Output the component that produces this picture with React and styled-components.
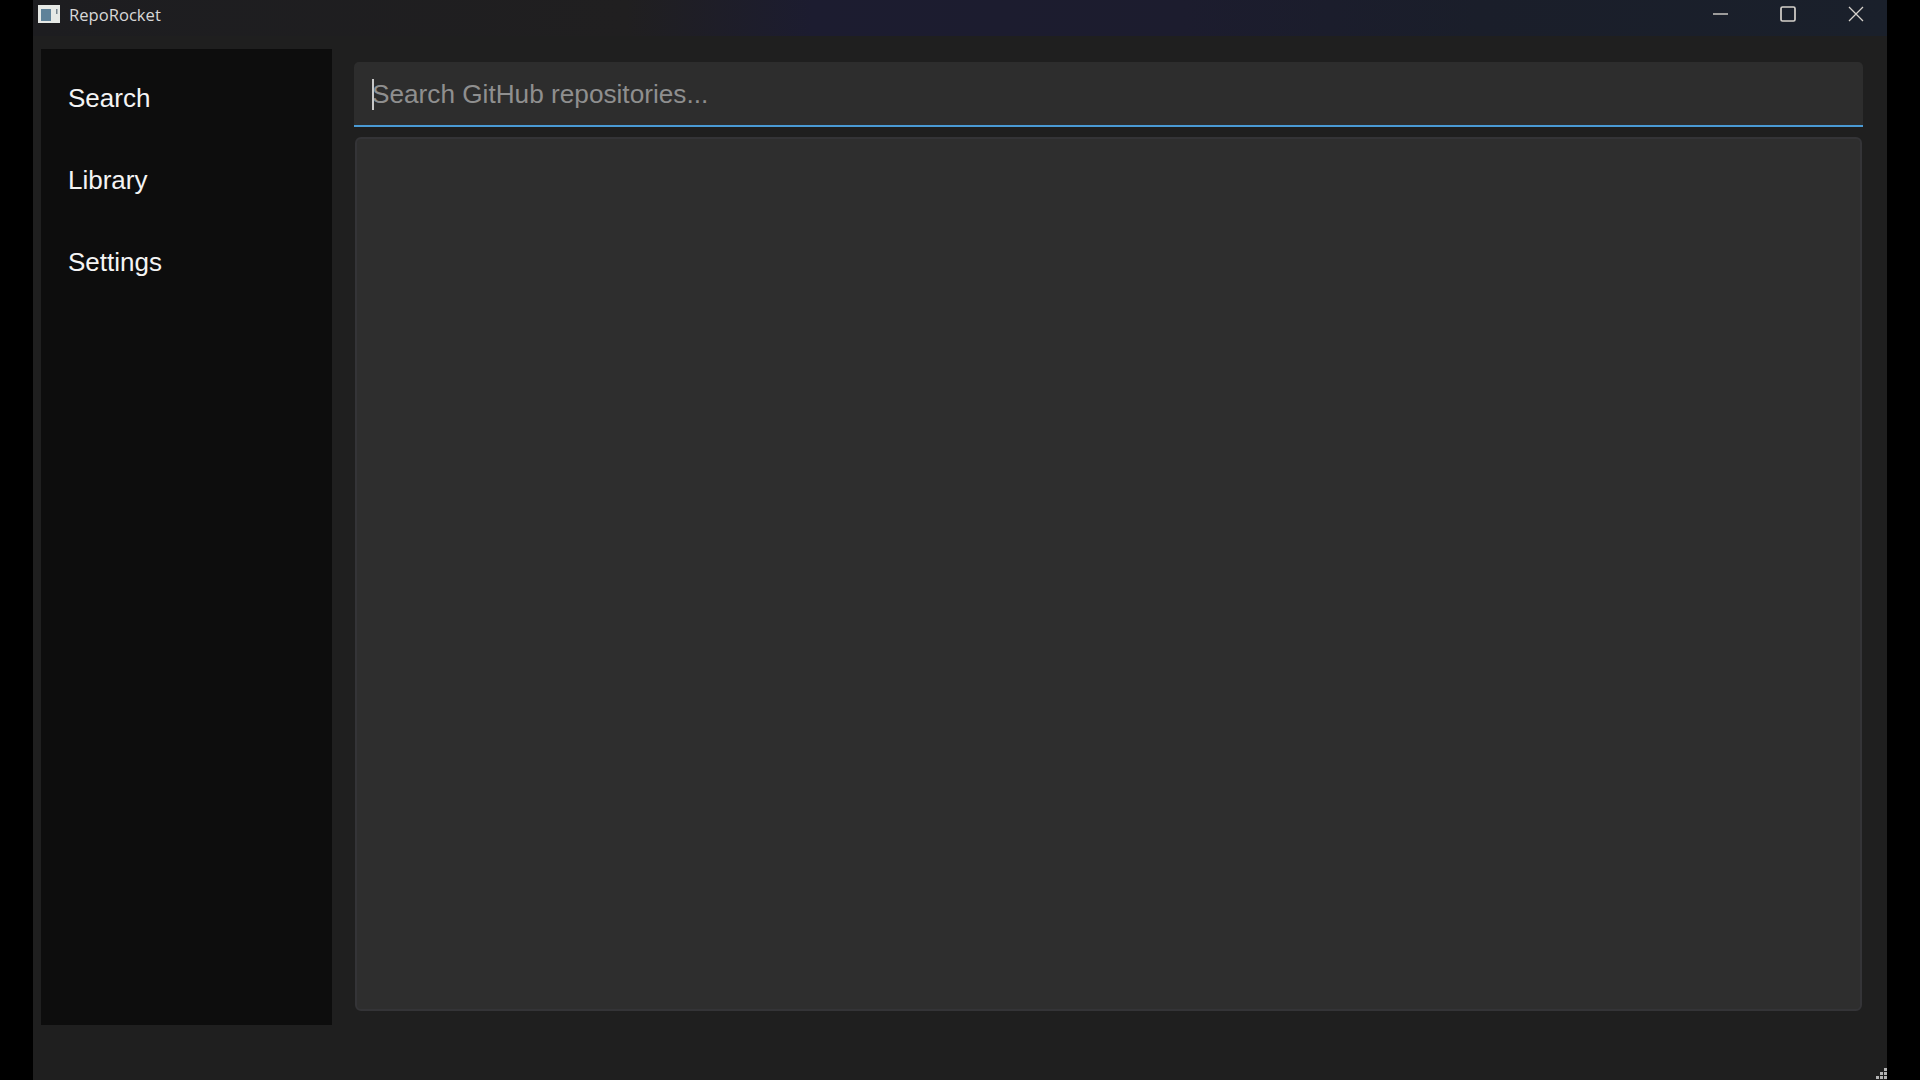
import React from "react";
import styled, { createGlobalStyle } from "styled-components";

const Global = createGlobalStyle`
  html, body { margin: 0; padding: 0; background: #000; height: 100%; overflow: hidden; }
  #root { height: 100%; }
  * { box-sizing: border-box; }
`;

const Screen = styled.div`
  width: 1920px;
  height: 1080px;
  padding: 0 33px;
  background: #000;
`;

const Win = styled.div`
  position: relative;
  height: 100%;
  display: flex;
  flex-direction: column;
  background: #1f1f1f;
`;

const TitleBar = styled.header`
  height: 36px;
  flex: none;
  display: flex;
  align-items: center;
  padding: 0 23px 0 5px;
  background: linear-gradient(90deg, #1d1d20 0%, #201f20 32%, #1c1c30 42%, #1c1c2e 62%, #1a1e2a 78%, #1a202b 100%);
`;

const AppIcon = styled.svg`
  width: 22px;
  height: 18px;
  flex: none;
  margin-top: -9px;
`;

const AppName = styled.span`
  margin-left: 9px;
  margin-top: -8px;
  font: 16.6px "Open Sans", "Noto Sans", sans-serif;
  color: #d8d8d8;
`;

const Controls = styled.div`
  margin-left: auto;
  margin-top: -8px;
  display: flex;
  align-items: center;
  gap: 52px;
`;

const Ctl = styled.svg`
  width: 16px;
  height: 16px;
  display: block;
  stroke: #d6d2cc;
  fill: none;
`;

const Body = styled.div`
  flex: 1;
  display: flex;
  padding: 13px 24px 55px 8px;
  gap: 22px;
`;

const Sidebar = styled.nav`
  width: 291px;
  flex: none;
  padding-top: 8px;
  background: #0d0d0d;
`;

const NavItem = styled.div`
  height: 82px;
  display: flex;
  align-items: center;
  padding-left: 27px;
  font: 26px "Liberation Sans", Arial, sans-serif;
  color: #f4f4f4;
`;

const Main = styled.main`
  flex: 1;
  display: flex;
  flex-direction: column;
  gap: 10px;
  padding-bottom: 14px;
`;

const SearchWrap = styled.div`
  position: relative;
  margin-top: 13px;
  height: 65px;
  flex: none;
`;

const SearchInput = styled.input`
  width: 100%;
  height: 100%;
  display: block;
  border: 0;
  outline: 0;
  border-radius: 5px 5px 0 0;
  border-bottom: 2px solid #4a9ad4;
  background: #2d2d2d;
  padding: 1px 0 0 18px;
  font: 26.2px "Liberation Sans", Arial, sans-serif;
  color: #eee;
  &::placeholder { color: #8f8f8f; opacity: 1; }
`;

const Caret = styled.span`
  position: absolute;
  left: 18px;
  top: 17px;
  width: 2px;
  height: 31px;
  background: #c8c8c8;
`;

const Results = styled.section`
  flex: 1;
  margin: 0 1px;
  border-radius: 6px;
  border: 2px solid #343437;
  background: #2e2e2e;
`;

const Grip = styled.svg`
  position: absolute;
  right: 0;
  bottom: 0;
  width: 11px;
  height: 12px;
  fill: #b4b4b4;
`;

export default function App() {
  return (
    <Screen>
      <Global />
      <Win>
        <TitleBar>
          <AppIcon viewBox="0 0 22 18">
            <rect width="22" height="18" fill="#e6e9e6" />
            <rect x="3" y="4" width="10" height="12" fill="#5f8299" />
            <rect x="18" y="4" width="1.5" height="5" fill="#77858f" />
          </AppIcon>
          <AppName>RepoRocket</AppName>
          <Controls>
            <Ctl viewBox="0 0 16 16"><path d="M1 8H16" strokeWidth="1.4" /></Ctl>
            <Ctl viewBox="0 0 16 16"><rect x="1" y="1" width="14" height="14" rx="1.5" strokeWidth="1.7" /></Ctl>
            <Ctl viewBox="0 0 16 16"><path d="M1 1L15 15M15 1L1 15" strokeWidth="1.3" /></Ctl>
          </Controls>
        </TitleBar>
        <Body>
          <Sidebar>
            <NavItem>Search</NavItem>
            <NavItem>Library</NavItem>
            <NavItem>Settings</NavItem>
          </Sidebar>
          <Main>
            <SearchWrap>
              <SearchInput placeholder="Search GitHub repositories..." />
              <Caret />
            </SearchWrap>
            <Results />
          </Main>
        </Body>
        <Grip viewBox="0 0 11 12">
          <rect x="8" y="0" width="3" height="3" />
          <rect x="4" y="4" width="3" height="3" />
          <rect x="8" y="4" width="3" height="3" />
          <rect x="0" y="8" width="3" height="3" />
          <rect x="4" y="8" width="3" height="3" />
          <rect x="8" y="8" width="3" height="3" />
        </Grip>
      </Win>
    </Screen>
  );
}
